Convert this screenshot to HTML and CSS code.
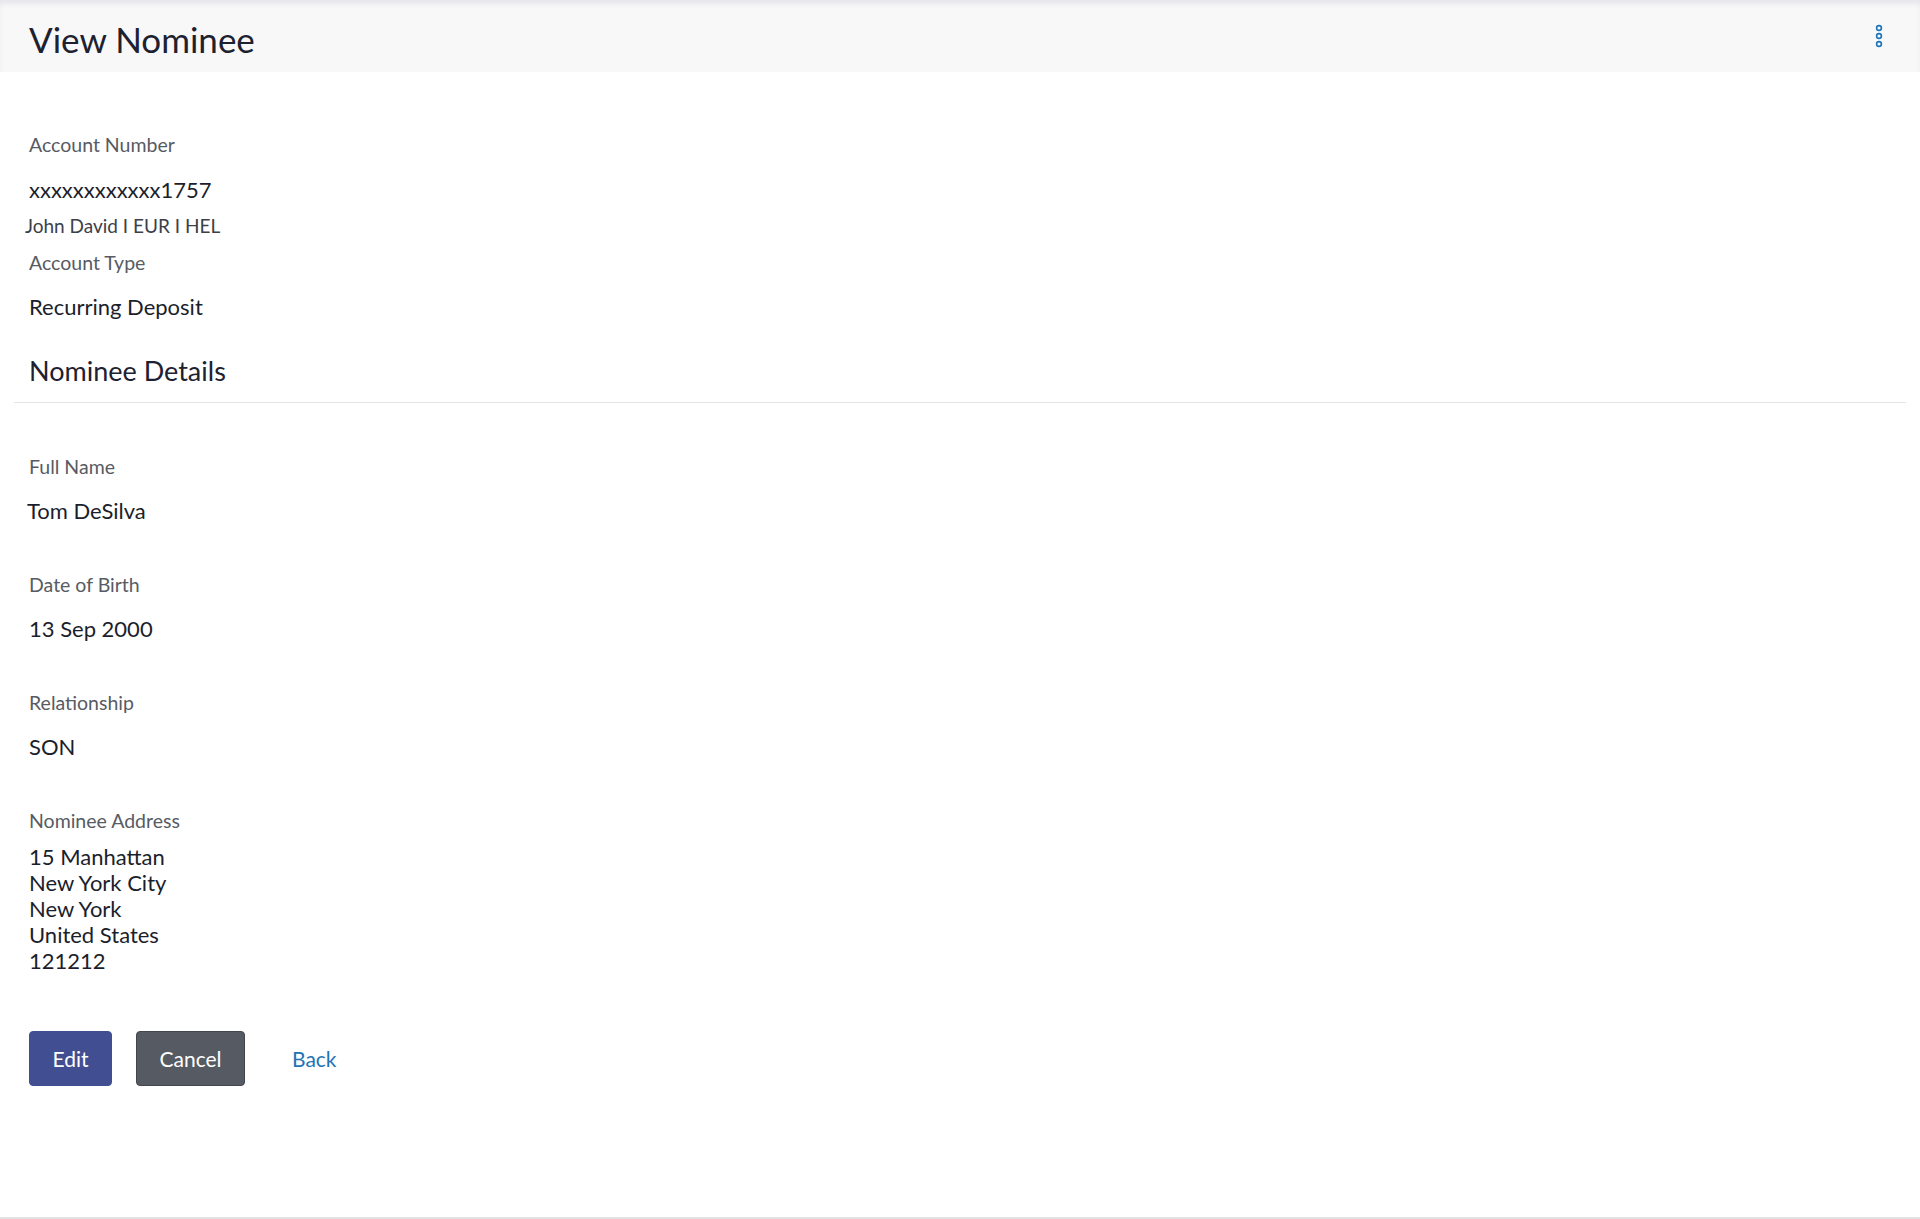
FILE: index.html
```html
<!DOCTYPE html>
<html lang="en">
<head>
<meta charset="utf-8">
<title>View Nominee</title>
<link rel="stylesheet" href="styles.css">
</head>
<body>
<header class="page-header">
  <h1 class="page-title">View Nominee</h1>
  <button class="menu-btn" aria-label="More options">
    <svg width="10" height="24" viewBox="0 0 10 24">
      <circle cx="5" cy="4" r="2.4" fill="none" stroke="#1c75bc" stroke-width="1.6"/>
      <circle cx="5" cy="12" r="2.4" fill="none" stroke="#1c75bc" stroke-width="1.6"/>
      <circle cx="5" cy="20" r="2.4" fill="none" stroke="#1c75bc" stroke-width="1.6"/>
    </svg>
  </button>
</header>
<main class="content">
  <section class="account">
    <div class="label first">Account Number</div>
    <div class="value">xxxxxxxxxxxx1757</div>
    <div class="sub">John David I EUR I HEL</div>
    <div class="label type">Account Type</div>
    <div class="value">Recurring Deposit</div>
  </section>
  <h2 class="section-title">Nominee Details</h2>
  <hr class="divider">
  <section class="nominee">
    <div class="field">
      <div class="label">Full Name</div>
      <div class="value name">Tom DeSilva</div>
    </div>
    <div class="field">
      <div class="label">Date of Birth</div>
      <div class="value">13 Sep 2000</div>
    </div>
    <div class="field">
      <div class="label">Relationship</div>
      <div class="value">SON</div>
    </div>
    <div class="field">
      <div class="label">Nominee Address</div>
      <div class="address">
        <div>15 Manhattan</div>
        <div>New York City</div>
        <div>New York</div>
        <div>United States</div>
        <div>121212</div>
      </div>
    </div>
  </section>
  <div class="actions">
    <button class="btn btn-primary">Edit</button>
    <button class="btn btn-secondary">Cancel</button>
    <a class="link-back" href="#">Back</a>
  </div>
</main>
<footer class="page-footer"></footer>
</body>
</html>
```
FILE: styles.css
```css
* { box-sizing: border-box; }
html, body { margin: 0; padding: 0; }
body {
  font-family: Lato, "Open Sans", Arial, sans-serif;
  background: #ffffff;
  color: #1b1e2b;
  width: 1920px;
  height: 1219px;
  position: relative;
  overflow: hidden;
}
.page-header {
  height: 72px;
  background: #f8f8f8;
  display: flex;
  align-items: center;
  justify-content: space-between;
  padding: 0 36px 0 29px;
  box-shadow: inset 0 5px 6px -2px #e2e2ea;
}
.page-title {
  margin: 0;
  font-weight: 400;
  font-size: 35px;
  line-height: 40px;
  color: #1d2130;
  padding-top: 6px;
}
.menu-btn {
  background: none;
  border: 0;
  padding: 0;
  margin-top: 0;
  display: flex;
}
.content { padding: 0 14px; }
.label {
  font-size: 19.5px;
  line-height: 24px;
  color: #575b63;
  padding-left: 15px;
}
.value {
  font-size: 22px;
  line-height: 26px;
  color: #1b1e2b;
  padding-left: 15px;
  margin-top: 20px;
}
.account .label.first { margin-top: 61px; }
.sub {
  font-size: 19px;
  line-height: 22px;
  color: #3c4049;
  padding-left: 11px;
  margin-top: 12px;
}
.account .label.type { margin-top: 14px; }
.account .value:last-child { margin-top: 19px; }
.section-title {
  margin: 34px 0 0;
  font-weight: 400;
  font-size: 27px;
  line-height: 34px;
  color: #1d2130;
  padding-left: 15px;
}
.divider {
  border: 0;
  height: 1px;
  background: #e4e4e4;
  margin: 14px 0 0;
}
.nominee .field { margin-top: 49px; }
.nominee .field:first-child { margin-top: 52px; }
.nominee .value { margin-top: 19px; }
.value.name { padding-left: 13px; }
.address {
  font-size: 22px;
  line-height: 26px;
  color: #1b1e2b;
  padding-left: 15px;
  margin-top: 11px;
}
.actions {
  display: flex;
  align-items: center;
  margin-top: 57px;
  padding-left: 15px;
}
.btn {
  font-family: inherit;
  font-size: 21px;
  height: 55px;
  border-radius: 4px;
  color: #ffffff;
  padding: 0 22px;
  cursor: pointer;
}
.btn-primary {
  background: #414e91;
  border: 1px solid #414e91;
  width: 83px;
}
.btn-secondary {
  background: #555a63;
  border: 1px solid #42464d;
  margin-left: 24px;
  width: 109px;
}
.link-back {
  color: #1f74b5;
  font-size: 21px;
  text-decoration: none;
  margin-left: 47px;
}
.page-footer {
  position: absolute;
  left: 0;
  right: 0;
  bottom: 0;
  height: 2px;
  background: #e2e2e2;
}
```
